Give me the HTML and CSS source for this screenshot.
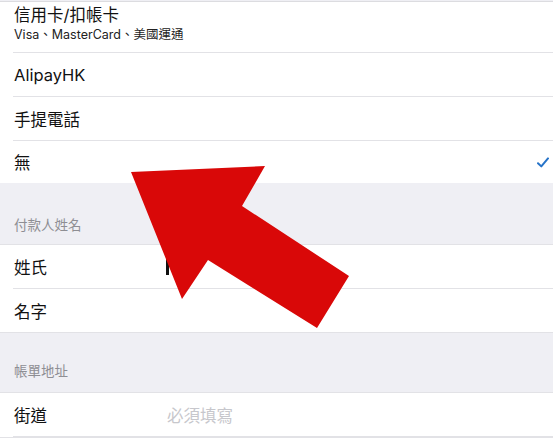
FILE: index.html
```html
<!DOCTYPE html>
<html lang="zh-Hant">
<head>
    <meta charset="UTF-8">
    <meta name="viewport" content="width=device-width, initial-scale=1.0">
    <title>付款方式</title>
    <link rel="stylesheet" href="styles.css">
</head>
<body>

    <!-- Payment methods -->
    <div class="group top">
        <div class="cell tall">
            <div class="title">信用卡/扣帳卡</div>
            <div class="subtitle">Visa、MasterCard、美國運通</div>
        </div>
        <div class="cell"><span class="label">AlipayHK</span></div>
        <div class="cell"><span class="label">手提電話</span></div>
        <div class="cell last">
            <span class="label">無</span>
            <svg class="check" width="12" height="11" viewBox="0 0 12 11">
                <path d="M1 6.2 L4.3 9.4 L11 1.4" fill="none" stroke="#2673c8" stroke-width="2" stroke-linecap="round" stroke-linejoin="round"/>
            </svg>
        </div>
    </div>

    <!-- Payer name -->
    <div class="section first">付款人姓名</div>
    <div class="group">
        <div class="cell field">
            <span class="label">姓氏</span>
            <span class="input"><span class="cursor"></span></span>
        </div>
        <div class="cell field last">
            <span class="label">名字</span>
            <span class="input"></span>
        </div>
    </div>

    <!-- Billing address -->
    <div class="section">帳單地址</div>
    <div class="group">
        <div class="cell field">
            <span class="label">街道</span>
            <span class="input placeholder">必須填寫</span>
        </div>
    </div>

    <!-- Pointer arrow drawn over the form -->
    <svg class="arrow" width="553" height="438" viewBox="0 0 553 438">
        <polygon points="131,172 265,166 242,206 349,276 317,328 208,260 182,299" fill="#d90808"/>
    </svg>

</body>
</html>
```

FILE: styles.css
```css
body {
    margin: 0;
    background-color: #efeff4;
    font-family: "Inter", "Noto Sans CJK TC", sans-serif;
    color: #111;
    overflow: hidden;
    position: relative;
    height: 438px;
}
.group {
    background-color: #fff;
    border-top: 1px solid #e2e2e6;
    border-bottom: 1px solid #e2e2e6;
}
.group.top {
    margin-top: 1px;
    border-top: 1px solid #dcdce0;
    border-bottom: none;
}
.cell {
    margin-left: 13px;
    padding-left: 1px;
    height: 43px;
    display: flex;
    align-items: center;
    border-bottom: 1px solid #e2e2e6;
    padding-right: 3px;
}
.cell.tall {
    height: 50px;
    flex-direction: column;
    align-items: flex-start;
    justify-content: flex-start;
}
.cell.last {
    border-bottom: none;
}
.group.top .cell.last {
    height: 42px;
}
.title {
    font-size: 16.5px;
    line-height: 20px;
    margin-top: 3px;
}
.subtitle {
    font-size: 12.5px;
    line-height: 16px;
    margin-top: 2px;
    color: #222;
}
.label {
    font-size: 16.5px;
    flex: 1;
}
.field .label {
    flex: 0 0 153px;
}
.input {
    flex: 1;
    font-size: 16.5px;
    height: 20px;
    display: flex;
    align-items: center;
}
.placeholder {
    color: #c7c7cc;
}
.cursor {
    width: 3px;
    height: 16px;
    background-color: #111;
    margin-left: -1px;
}
.check {
    margin-right: 1px;
}
.section {
    box-sizing: border-box;
    height: 59px;
    padding: 0 0 12px 14px;
    display: flex;
    align-items: flex-end;
    font-size: 13.5px;
    color: #8e8e93;
}
.section.first {
    height: 61px;
    padding-bottom: 10px;
}
.arrow {
    position: absolute;
    left: 0;
    top: 0;
    pointer-events: none;
}
```
